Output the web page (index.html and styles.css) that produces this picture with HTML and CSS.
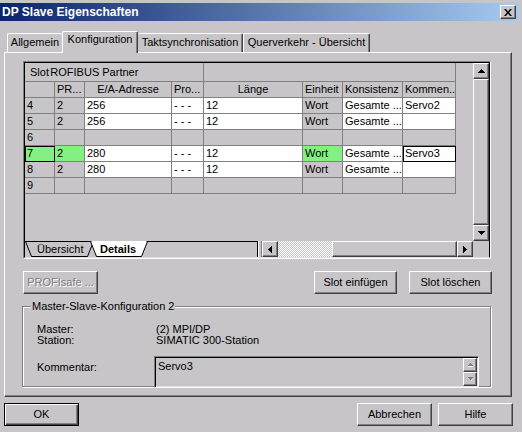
FILE: index.html
```html
<!DOCTYPE html>
<html>
<head>
<meta charset="utf-8">
<link rel="stylesheet" href="styles.css">
</head>
<body>
<div class="win">
  <div class="title">
    <span class="title-text">DP Slave Eigenschaften</span>
    <span class="close raised"><svg width="8" height="7" viewBox="0 0 8 7"><path d="M0 0h2l2 2.5L6 0h2L5 3.5 8 7H6L4 4.5 2 7H0l3-3.5z"/></svg></span>
  </div>
  <div class="tabs">
    <div class="tab t1">Allgemein</div>
    <div class="tab sel">Konfiguration</div>
    <div class="tab t3">Taktsynchronisation</div>
    <div class="tab t4">Querverkehr - Übersicht</div>
  </div>
  <div class="panel">
    <div class="gridframe">
      <div class="grid">
        <div class="gtop">
          <div class="table">
            <div class="filler"></div>
            <div class="c h1 hslot"><span class="slot-h">Slot</span><span class="partner">PROFIBUS Partner</span></div>
            <div class="c h1 hrest"></div>

            <div class="c"></div><div class="c">PR...</div><div class="c ctr">E/A-Adresse</div><div class="c">Pro...</div><div class="c ctr">Länge</div><div class="c">Einheit</div><div class="c">Konsistenz</div><div class="c">Kommen...</div>

            <div class="c">4</div><div class="c">2</div><div class="c w">256</div><div class="c w">- - -</div><div class="c w">12</div><div class="c">Wort</div><div class="c w">Gesamte ...</div><div class="c w">Servo2</div>

            <div class="c">5</div><div class="c">2</div><div class="c w">256</div><div class="c w">- - -</div><div class="c w">12</div><div class="c">Wort</div><div class="c w">Gesamte ...</div><div class="c w"></div>

            <div class="c">6</div><div class="c"></div><div class="c"></div><div class="c"></div><div class="c"></div><div class="c"></div><div class="c"></div><div class="c"></div>

            <div class="c g focus">7</div><div class="c g">2</div><div class="c w">280</div><div class="c w">- - -</div><div class="c w">12</div><div class="c g">Wort</div><div class="c w">Gesamte ...</div><div class="c w focus">Servo3</div>

            <div class="c">8</div><div class="c">2</div><div class="c w">280</div><div class="c w">- - -</div><div class="c w">12</div><div class="c">Wort</div><div class="c w">Gesamte ...</div><div class="c w"></div>

            <div class="c">9</div><div class="c"></div><div class="c"></div><div class="c"></div><div class="c"></div><div class="c"></div><div class="c"></div><div class="c"></div>
          </div>
          <div class="vscroll">
            <div class="sbtn raised"><svg width="7" height="4" viewBox="0 0 7 4"><path d="M3 0h1v1h1v1h1v1h1v1H0V3h1V2h1V1h1z"/></svg></div>
            <div class="vthumb raised"></div>
            <div class="sbtn raised"><svg width="7" height="4" viewBox="0 0 7 4"><path d="M0 0h7v1H6v1H5v1H4v1H3V3H2V2H1V1H0z"/></svg></div>
          </div>
        </div>
        <div class="gbottom">
          <div class="sheettabs">
            <svg class="stbg" width="233" height="16" viewBox="0 0 233 16">
              <line x1="0" y1="0.5" x2="233" y2="0.5" stroke="#000"/>
              <line x1="232.5" y1="0" x2="232.5" y2="16" stroke="#000"/>
              <polygon points="0.5,0.5 6.5,15.5 62.5,15.5 68.5,0.5" fill="#c8c5c8" stroke="#000"/>
              <polygon points="65.5,0.5 71.5,15.5 116.5,15.5 122.5,0.5" fill="#fff" stroke="#000"/>
              <line x1="66.5" y1="0.5" x2="121.5" y2="0.5" stroke="#fff"/>
            </svg>
            <span class="st1">Übersicht</span>
            <span class="st2">Details</span>
          </div>
          <div class="splitter"></div>
          <div class="hscroll">
            <div class="sbtn raised"><svg width="4" height="7" viewBox="0 0 4 7"><path d="M3 0h1v7H3V6H2V5H1V4H0V3h1V2h1V1h1z"/></svg></div>
            <div class="htrack"></div>
            <div class="hthumb raised"></div>
            <div class="sbtn raised"><svg width="4" height="7" viewBox="0 0 4 7"><path d="M0 0h1v1h1v1h1v1h1v1H3v1H2v1H1v1H0z"/></svg></div>
          </div>
          <div class="corner"></div>
        </div>
      </div>
    </div>

    <div class="btnrow">
      <div class="btn disabled b-safe">PROFIsafe ...</div>
      <div class="btn b-ins">Slot einfügen</div>
      <div class="btn b-del">Slot löschen</div>
    </div>

    <div class="group">
      <span class="glabel">Master-Slave-Konfiguration 2</span>
      <div class="ginfo">
        <span>Master:</span><span>(2) MPI/DP</span>
        <span>Station:</span><span>SIMATIC 300-Station</span>
      </div>
      <div class="krow">
        <span class="klabel">Kommentar:</span>
        <div class="kbox">
          <span class="ktext">Servo3</span>
          <div class="spin">
            <div class="spbtn raised"><svg width="5" height="4" viewBox="0 0 5 4"><path d="M2 0h1v1h1v1h1v1H0V2h1V1h1z" fill="#808080"/><path d="M0 3h5v1H0z" fill="#fff"/></svg></div>
            <div class="spbtn raised"><svg width="5" height="4" viewBox="0 0 5 4"><path d="M0 0h5v1H4v1H3v1H2V2H1V1H0z" fill="#808080"/><path d="M3 3h1v1H3z" fill="#fff"/></svg></div>
          </div>
        </div>
      </div>
    </div>
  </div>

  <div class="footer">
    <div class="btn default b-ok">OK</div>
    <div class="btn b-abb">Abbrechen</div>
    <div class="btn b-hil">Hilfe</div>
  </div>
</div>
</body>
</html>
```

FILE: styles.css
```css
* { box-sizing: border-box; }
html, body { margin: 0; padding: 0; }
body {
  width: 522px;
  height: 432px;
  overflow: hidden;
  background: #c8c5c8;
  font-family: "Liberation Sans", Arial, sans-serif;
  font-size: 11px;
  color: #000;
}
.win {
  width: 522px;
  height: 432px;
  padding-top: 3px;
  background: #c8c5c8;
}
.raised {
  background: #c8c5c8;
  border: 1px solid;
  border-color: #fff #404040 #404040 #fff;
  box-shadow: inset -1px -1px #808080;
}

/* title */
.title {
  width: 519px;
  height: 18px;
  background: linear-gradient(to right, #0a246a, #a6caf0);
  display: flex;
  align-items: center;
  justify-content: space-between;
  padding: 0 3px 0 2px;
}
.title-text {
  color: #fff;
  font-weight: bold;
  font-size: 12px;
  line-height: 18px;
}
.close {
  width: 16px;
  height: 14px;
  display: flex;
  align-items: center;
  justify-content: center;
}

/* tabs */
.tabs {
  display: flex;
  align-items: flex-end;
  height: 21px;
  margin-top: 10px;
  padding-left: 7px;
  position: relative;
  z-index: 1;
}
.tab {
  height: 19px;
  border-top: 1px solid #fff;
  border-left: 1px solid #fff;
  border-right: 1px solid #404040;
  border-radius: 2px 2px 0 0;
  box-shadow: inset -1px 0 #808080;
  text-align: center;
  line-height: 13px;
  padding-top: 2px;
  white-space: nowrap;
  background: #c8c5c8;
}
.t1 { width: 55px; border-right: none; box-shadow: none; }
.sel { width: 76px; height: 22px; margin-bottom: -1px; padding-top: 1px; }
.t3 { width: 105px; border-left: none; }
.t4 { width: 127px; }

/* panel */
.panel {
  margin-left: 4px;
  width: 508px;
  height: 345px;
  border: 1px solid;
  border-color: #fff #404040 #404040 #fff;
  box-shadow: inset -1px -1px #808080;
  padding: 8px 0 0 18px;
}

/* grid */
.gridframe {
  width: 468px;
  height: 198px;
  border: 1px solid;
  border-color: #808080 #fff #fff #808080;
}
.grid {
  width: 466px;
  height: 196px;
  border: 1px solid #000;
  border-bottom-color: #dfdfdf;
}
.gtop { display: flex; height: 178px; }
.table {
  width: 448px;
  height: 178px;
  display: grid;
  grid-template-columns: 30px 30px 87px 32px 99px 40px 60px 53px 17px;
  grid-template-rows: 19px 16px repeat(6, 16px);
  align-content: start;
  background: #c8c5c8;
}
.filler { grid-column: 9; grid-row: 1 / 9; }
.c {
  border-right: 1px solid #808080;
  border-bottom: 1px solid #808080;
  padding-left: 2px;
  line-height: 15px;
  white-space: nowrap;
  overflow: hidden;
}
.ctr { text-align: center; padding-left: 0; }
.w { background: #fff; }
.g { background: #84f084; }
.focus { outline: 1px solid #000; outline-offset: -1px; }
.h1 { line-height: 18px; }
.hslot { grid-column: span 4; display: flex; padding-left: 0; }
.hrest { grid-column: span 4; }
.slot-h { width: 25px; padding-left: 5px; flex: none; white-space: nowrap; }
.partner { overflow: hidden; flex: 1; text-indent: -7px; white-space: nowrap; }

.vscroll {
  width: 16px;
  display: flex;
  flex-direction: column;
}
.sbtn {
  width: 16px;
  height: 16px;
  flex: none;
  display: flex;
  align-items: center;
  justify-content: center;
}
.vthumb { flex: 1; }

.gbottom { display: flex; height: 16px; }
.sheettabs {
  width: 233px;
  height: 16px;
  position: relative;
  display: flex;
  line-height: 14px;
  padding-top: 1px;
}
.stbg { position: absolute; left: 0; top: 0; }
.st1 { position: relative; width: 75px; padding-left: 12px; }
.st2 { position: relative; font-weight: bold; }
.splitter {
  width: 4px;
  border-left: 1px solid #fff;
  border-right: 1px solid #808080;
}
.hscroll { width: 211px; display: flex; }
.htrack {
  width: 54px;
  background-color: #fff;
  background-image: conic-gradient(#fff 25%, #c8c5c8 0 50%, #fff 0 75%, #c8c5c8 0);
  background-size: 2px 2px;
}
.hthumb { width: 125px; }
.corner { width: 16px; background: #c8c5c8; }

/* buttons */
.btn {
  height: 23px;
  border: 1px solid;
  border-color: #fff #404040 #404040 #fff;
  box-shadow: inset -1px -1px #808080;
  text-align: center;
  line-height: 21px;
  background: #c8c5c8;
  white-space: nowrap;
}
.disabled { color: #808080; text-shadow: 1px 1px 0 #fff; }
.btnrow { display: flex; margin-top: 12px; }
.b-safe { width: 75px; }
.b-ins { width: 83px; margin-left: 216px; }
.b-del { width: 83px; margin-left: 12px; }

/* group */
.group {
  margin-top: 12px;
  margin-left: -1px;
  width: 469px;
  height: 81px;
  border: 1px solid #808080;
  box-shadow: inset 1px 1px #fff, 1px 1px #fff;
}
.glabel {
  display: inline-block;
  margin: -7px 0 0 8px;
  padding: 0 1px;
  background: #c8c5c8;
  line-height: 13px;
  vertical-align: top;
}
.ginfo {
  display: grid;
  grid-template-columns: 119px auto;
  margin: 5px 0 0 14px;
  line-height: 11px;
}
.krow {
  display: flex;
  margin: 10px 0 0 14px;
}
.klabel { width: 117px; padding-top: 5px; line-height: 13px; }
.kbox {
  width: 325px;
  height: 32px;
  border: 1px solid;
  border-color: #808080 #fff #fff #808080;
  box-shadow: inset 1px 1px #000, inset -1px -1px #dfdfdf;
  display: flex;
  padding: 1px;
}
.ktext { flex: 1; padding: 2px 0 0 2px; line-height: 13px; }
.spin { width: 14px; display: flex; flex-direction: column; }
.spbtn {
  height: 14px;
  display: flex;
  align-items: center;
  justify-content: center;
}

/* footer */
.footer { display: flex; margin-top: 6px; padding-left: 4px; }
.default {
  border: 1px solid #000;
  box-shadow: inset 1px 1px #fff, inset -1px -1px #404040, inset -2px -2px #808080;
}
.b-ok { width: 75px; }
.b-abb { width: 75px; margin-left: 278px; }
.b-hil { width: 75px; margin-left: 6px; }
```
